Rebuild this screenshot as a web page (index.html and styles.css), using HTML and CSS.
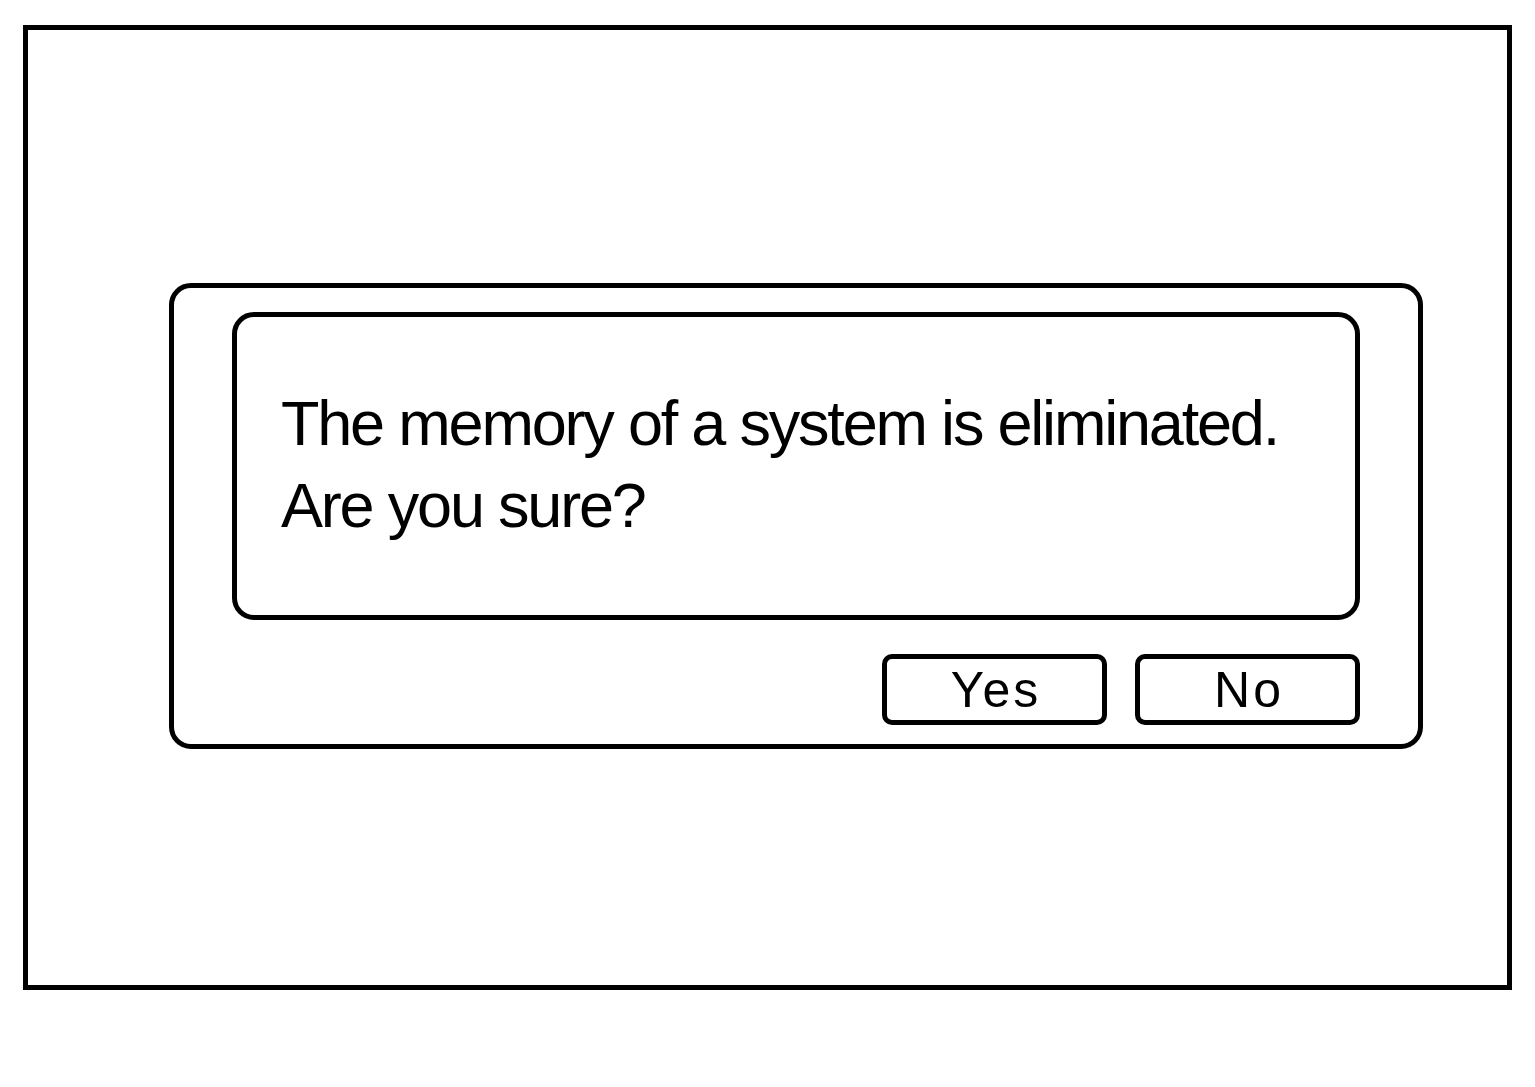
FILE: index.html
```html
<!DOCTYPE html>
<html lang="en">
<head>
    <meta charset="UTF-8">
    <meta name="viewport" content="width=device-width, initial-scale=1.0">
    <title>Confirm</title>
    <link rel="stylesheet" href="styles.css">
</head>
<body>
    <div id="screen">
        <div class="dialog">
            <div class="message">
                <p>The memory of a system is eliminated.</p>
                <p>Are you sure?</p>
            </div>
            <div class="buttons">
                <button>Yes</button>
                <button>No</button>
            </div>
        </div>
    </div>
</body>
</html>
```

FILE: styles.css
```css
body {
    margin: 0;
    background-color: #fff;
    font-family: "Liberation Sans", Arial, sans-serif;
    color: #000;
}

#screen {
    box-sizing: border-box;
    width: 1489px;
    height: 965px;
    margin: 25px 0 0 23px;
    border: 5px solid #000;
    padding: 253px 0 0 141px;
}

.dialog {
    box-sizing: border-box;
    width: 1254px;
    height: 466px;
    border: 5px solid #000;
    border-radius: 22px;
    padding: 24px 58px 19px;
}

.message {
    box-sizing: border-box;
    height: 308px;
    border: 5px solid #000;
    border-radius: 22px;
    padding: 65px 0 0 44px;
}

.message p {
    margin: 0;
    font-size: 63px;
    line-height: 82px;
    letter-spacing: -2.2px;
}

.buttons {
    display: flex;
    justify-content: flex-end;
    gap: 28px;
    margin-top: 34px;
}

button {
    box-sizing: border-box;
    width: 225px;
    height: 71px;
    border: 5px solid #000;
    border-radius: 10px;
    background: #fff;
    padding: 0 0 0 3px;
    font-family: "Liberation Sans", Arial, sans-serif;
    font-size: 50px;
    letter-spacing: 3px;
    color: #000;
}
```
